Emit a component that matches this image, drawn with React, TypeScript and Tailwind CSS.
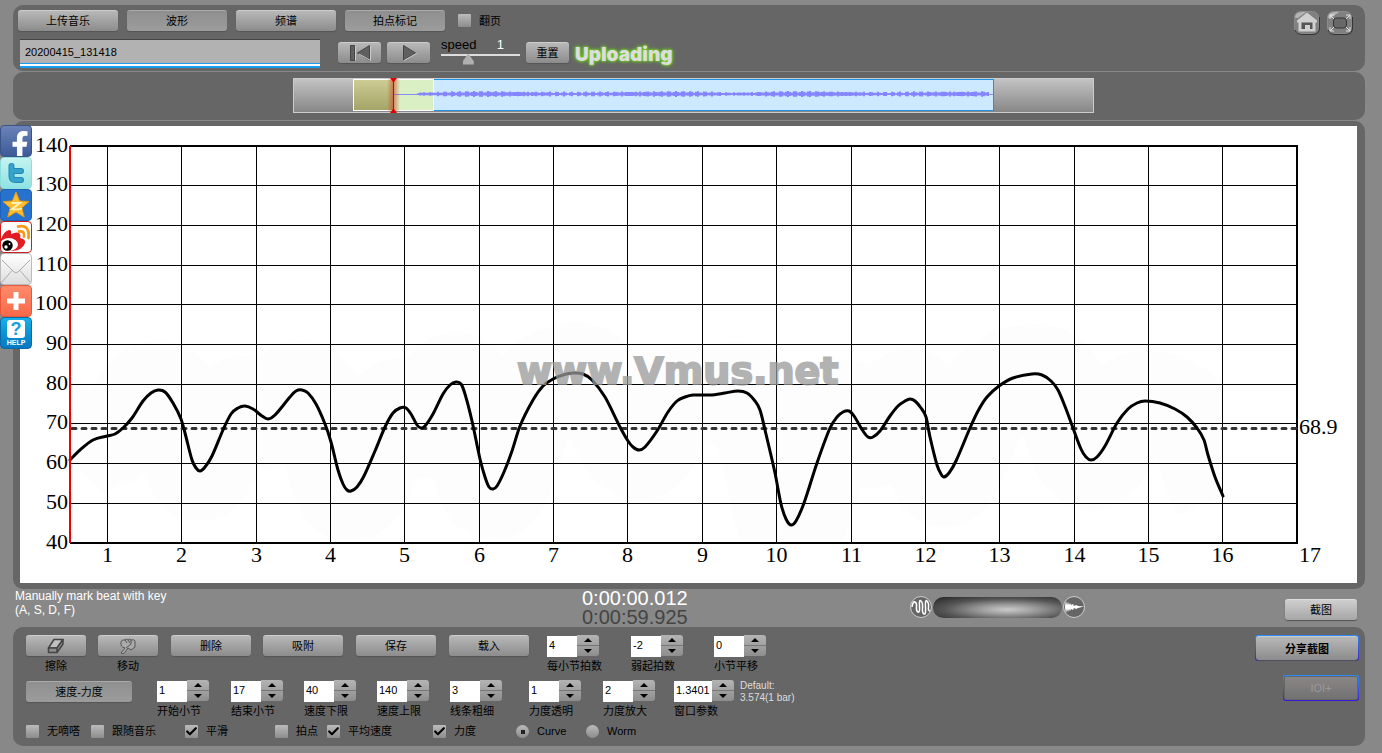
import type { ReactNode } from "react";
import { Check } from "lucide-react";
import { FaFacebookF } from "react-icons/fa";

const SANS = "font-['Liberation_Sans','Noto_Sans_CJK_SC',sans-serif]";
const PANEL = "rounded-[10px] bg-[#666]";

// tempo curve, one [x, y] pair per sample
const curve: [number, number][] = [
  [70, 460], [80, 450], [93, 440], [107, 436], [115, 434], [123, 428], [132, 418], [143, 401], [151, 393], [158, 390],
  [165, 392], [173, 403], [181, 419], [185, 433], [192, 460], [196, 468], [200, 471], [205, 467], [212, 456], [223, 430],
  [231, 414], [238, 408], [245, 406], [253, 409], [262, 416], [268, 419], [275, 415], [290, 397], [296, 391], [302, 390],
  [308, 393], [316, 404], [325, 424], [331, 442], [338, 470], [343, 484], [347, 490], [351, 491], [357, 487], [364, 476],
  [375, 451], [385, 427], [393, 413], [400, 408], [406, 408], [411, 414], [417, 425], [421, 428], [425, 426], [433, 414],
  [443, 394], [450, 385], [456, 382], [461, 384], [465, 394], [472, 421], [480, 459], [485, 477], [489, 487], [493, 489],
  [497, 486], [504, 472], [512, 451], [520, 426], [533, 400], [543, 386], [553, 379], [563, 375], [573, 373], [583, 374],
  [592, 380], [605, 397], [620, 427], [628, 441], [633, 447], [639, 450], [645, 447], [657, 431], [668, 412], [677, 401],
  [685, 397], [693, 395], [710, 395], [725, 393], [738, 391], [747, 393], [755, 401], [760, 410], [765, 430], [775, 473],
  [781, 504], [786, 519], [791, 525], [796, 521], [804, 503], [817, 463], [830, 428], [837, 417], [843, 412], [849, 411],
  [854, 416], [863, 431], [868, 437], [873, 437], [880, 431], [890, 416], [898, 406], [905, 401], [910, 399], [915, 401],
  [921, 408], [926, 417], [930, 437], [937, 465], [941, 474], [944, 477], [949, 473], [956, 461], [970, 428], [978, 411],
  [987, 397], [999, 386], [1013, 378], [1032, 374], [1042, 375], [1051, 381], [1058, 390], [1066, 409], [1073, 428], [1081, 449],
  [1086, 457], [1091, 460], [1097, 457], [1105, 446], [1117, 423], [1128, 409], [1137, 403], [1145, 401], [1160, 403], [1175, 409],
  [1187, 417], [1197, 428], [1204, 440], [1208, 455], [1215, 477], [1223, 496],
];

function smooth(pts: [number, number][]) {
  const slopes = pts.map((_, i) => {
    const a = pts[Math.max(i - 1, 0)];
    const b = pts[Math.min(i + 1, pts.length - 1)];
    return (b[1] - a[1]) / (b[0] - a[0]);
  });
  let d = `M${pts[0][0]} ${pts[0][1]}`;
  for (let i = 0; i < pts.length - 1; i++) {
    const [x0, y0] = pts[i];
    const [x1, y1] = pts[i + 1];
    const t = (x1 - x0) / 3;
    d += ` C${x0 + t} ${y0 + slopes[i] * t} ${x1 - t} ${y1 - slopes[i + 1] * t} ${x1} ${y1}`;
  }
  return d;
}

const bars = Array.from({ length: 17 }, (_, i) => i + 1);
const tempos = Array.from({ length: 11 }, (_, i) => 140 - i * 10);
const barX = (n: number) => Math.round(107 + (n - 1) * 74.35) + 0.5;
const tempoY = (t: number) => Math.floor(146 + (140 - t) * 3.97) + 0.5;

const TempoChart = () => (
  <svg viewBox="20 126 1337 457" className="block h-auto w-full bg-white font-['Liberation_Serif',serif] text-[22px]">
    <clipPath id="plot">
      <rect x="70" y="146" width="1153" height="397" />
    </clipPath>
    <path d={smooth(curve)} fill="none" stroke="#fdfdfd" strokeWidth="100" clipPath="url(#plot)" />
    {bars.slice(0, 16).map((n) => (
      <line key={n} x1={barX(n)} x2={barX(n)} y1="146" y2="543" stroke="#000" />
    ))}
    {tempos.map((t) => (
      <g key={t}>
        <line x1="70" x2="1297" y1={tempoY(t)} y2={tempoY(t)} stroke="#000" />
        <text x="68" y={tempoY(t) + 5} textAnchor="end">{t}</text>
      </g>
    ))}
    <path d="M70 146H1297V543H70" fill="none" stroke="#000" strokeWidth="2" />
    {bars.map((n) => (
      <text key={n} x={n === 17 ? 1310 : barX(n)} y="562" textAnchor="middle">{n}</text>
    ))}
    <line x1="72" x2="1297" y1="428.5" y2="428.5" stroke="#333" strokeWidth="3" strokeDasharray="4 6" strokeLinecap="round" />
    <text x="1299" y="434">68.9</text>
    <path d={smooth(curve)} fill="none" stroke="#000" strokeWidth="3" strokeLinecap="round" />
    <line x1="70" x2="70" y1="146" y2="543" stroke="#f00000" strokeWidth="2" />
    <text x="517" y="384" className="font-['DejaVu_Sans',sans-serif] text-[38px] font-bold" fill="#999" stroke="#999" strokeWidth="2" opacity="0.75">www.Vmus.net</text>
  </svg>
);

const wave = Array.from({ length: 286 }, (_, i) => {
  const x = 125 + i * 2;
  const h = 0.7 + Math.abs(Math.sin(i * 0.04)) * 0.8 + Math.abs(Math.sin(i * 2.3) * Math.cos(i * 0.9)) * 1.6;
  return `M${x} ${16 - h}V${16 + h}`;
}).join("");

const Overview = () => (
  <svg viewBox="0 0 801 35" className="h-[35px] w-[801px]">
    <defs>
      <linearGradient id="track" x1="0" y1="0" x2="0" y2="1">
        <stop offset="0" stopColor="#c4c4c4" />
        <stop offset="1" stopColor="#868686" />
      </linearGradient>
      <linearGradient id="past" x1="0" y1="0" x2="0" y2="1">
        <stop offset="0" stopColor="#cccc94" />
        <stop offset="1" stopColor="#a5a568" />
      </linearGradient>
      <linearGradient id="glow" x1="0" y1="0" x2="1" y2="0">
        <stop offset="0" stopColor="#d04020" stopOpacity="0" />
        <stop offset="0.5" stopColor="#d04020" stopOpacity="0.6" />
        <stop offset="1" stopColor="#d04020" stopOpacity="0" />
      </linearGradient>
    </defs>
    <rect x="0.5" y="0.5" width="800" height="34" fill="url(#track)" stroke="#ccc" />
    <rect x="60.5" y="1.5" width="640" height="31" fill="#cde9ff" stroke="#1b93e6" />
    <rect x="60.5" y="1.5" width="80" height="31" fill="#daf0c4" stroke="#fff" />
    <rect x="61" y="2" width="39" height="30" fill="url(#past)" />
    <path d="M101 16.500H700" stroke="#8a8aff" />
    <path d={wave} stroke="#8585ff" strokeWidth="2" />
    <rect x="94" y="1" width="13" height="32" fill="url(#glow)" />
    <path d="M100.500 2V33" stroke="#600" />
    <path d="M97 0H104L101 4V31L104 35H97L100 31V4Z" fill="#e00000" />
  </svg>
);

const TONES = {
  up: "border-[#ccc] from-[#b8b8b8] to-[#8c8c8c]",
  down: "border-[#aaa] from-[#8f8f8f] to-[#9c9c9c]",
  light: "border-[#ddd] from-[#cfcfcf] to-[#a6a6a6]",
};

type ButtonProps = { children: ReactNode; className: string; tone?: keyof typeof TONES; label?: string };

const Button = ({ children, className, tone = "up", label }: ButtonProps) => (
  <button
    aria-label={label}
    className={`flex min-h-[21px] shrink-0 items-center justify-center rounded-[3px] border-t bg-linear-to-b text-[11px] leading-4 text-black shadow-[0_1px_1px_#555] ${TONES[tone]} ${className}`}
  >
    {children}
  </button>
);

const Tick = ({ label, checked, radio }: { label: string; checked?: boolean; radio?: boolean }) => (
  <label className="flex items-center gap-2 text-[11px] leading-[14px] whitespace-nowrap">
    <span className="relative size-[13px] shrink-0">
      <input
        type={radio ? "radio" : "checkbox"}
        name={radio ? "line" : undefined}
        defaultChecked={checked}
        className={`peer block size-[13px] appearance-none bg-linear-to-b from-[#bbb] to-[#8c8c8c] ${radio ? "rounded-full" : "rounded-[1px]"}`}
      />
      {radio ? (
        <span className="pointer-events-none absolute top-[5px] left-[5px] hidden size-[4px] bg-[#222] peer-checked:block" />
      ) : (
        <Check className="pointer-events-none absolute top-0 left-0 hidden size-[13px] text-black peer-checked:block" strokeWidth={4} />
      )}
    </span>
    {label}
  </label>
);

const Stepper = ({ id, label, value, wide }: { id: string; label: string; value: string; wide?: boolean }) => (
  <div className="flex flex-col gap-px">
    <div className="flex">
      <input id={id} defaultValue={value} className={`mt-px h-[21px] bg-white px-[2px] pb-1 text-[11px] ${wide ? "w-[38px]" : "w-[30px]"}`} />
      <div className="flex h-[21px] w-[22px] flex-col divide-y divide-[#777] rounded-r-[3px] bg-linear-to-b from-[#b4b4b4] to-[#8e8e8e]">
        <button aria-label={`${label} +`} className="flex flex-1 items-center justify-center">
          <svg viewBox="0 0 8 4" className="h-1 w-2"><path d="M0 4L4 0L8 4Z" /></svg>
        </button>
        <button aria-label={`${label} -`} className="flex flex-1 items-center justify-center">
          <svg viewBox="0 0 8 4" className="h-1 w-2"><path d="M0 0L4 4L8 0Z" /></svg>
        </button>
      </div>
    </div>
    <label htmlFor={id} className="text-[11px] leading-4 whitespace-nowrap">{label}</label>
  </div>
);

const TILE = "relative flex size-8 items-center justify-center overflow-hidden rounded-[4px] border";

const ShareBar = () => (
  <nav className="absolute top-[125px] left-0 flex flex-col">
    <a href="#facebook" aria-label="Facebook" className={`${TILE} border-[#3a5488] bg-linear-to-b from-[#6b83b8] to-[#3d5a98]`}>
      <FaFacebookF className="mt-2 ml-2 size-7 shrink-0 text-white" />
    </a>
    <a href="#twitter" aria-label="Twitter" className={`${TILE} border-[#8fdcdc] bg-linear-to-b from-[#c4f3f1] to-[#8fe3e3]`}>
      <svg viewBox="0 0 32 32" className="size-8 shrink-0" fill="none" strokeLinecap="round" strokeLinejoin="round">
        <path d="M11.500 9V19Q11.500 23 15.500 23H21M11.500 14H21" stroke="#2387b5" strokeWidth="6" />
        <path d="M11.500 9V19Q11.500 23 15.500 23H21M11.500 14H21" stroke="#35a3cc" strokeWidth="4" />
      </svg>
    </a>
    <a href="#qzone" aria-label="Qzone" className={`${TILE} border-[#1c62b8] bg-[#2672cc]`}>
      <svg viewBox="0 0 32 32" className="size-8 shrink-0">
        <path d="M16 3L19.600 12L29 12.600L21.800 18.800L24.200 28L16 23L7.800 28L10.200 18.800L3 12.600L12.400 12Z" fill="#fdbd2c" stroke="#e89a10" />
        <path d="M11.500 14H20L12 20Q17 21 22 19.500" fill="none" stroke="#fff3c0" strokeWidth="1.800" />
      </svg>
    </a>
    <a href="#weibo" aria-label="Weibo" className={`${TILE} border-[#d01c1c] bg-white`}>
      <svg viewBox="0 0 32 32" className="size-8 shrink-0">
        <path d="M1 18Q4 10 9 9Q12 9 11 13Q18 10 20 13Q21 15 20 17Q26 18 25 22Q23 29 12 30Q2 30 1 25Z" fill="#e01c24" />
        <ellipse cx="9" cy="23.500" rx="9" ry="6.500" fill="#fff" />
        <circle cx="7.500" cy="24.500" r="5.200" fill="#000" />
        <circle cx="6" cy="26" r="1.700" fill="#fff" />
        <circle cx="9.500" cy="23" r="0.900" fill="#fff" />
        <path d="M18 5.500Q30 3 28.500 17M19 10.500Q25 9.500 24 15.500" fill="none" stroke="#f79a1c" strokeWidth="2.800" strokeLinecap="round" />
      </svg>
    </a>
    <a href="#mail" aria-label="Mail" className={`${TILE} border-[#bbb] bg-linear-to-b from-white to-[#ddd]`}>
      <svg viewBox="0 0 32 32" className="size-8 shrink-0" fill="none" stroke="#aaa">
        <path d="M2 7L14 19Q16 21 18 19L30 7M2 29L12 17.500M30 29L20 17.500" />
      </svg>
    </a>
    <a href="#more" aria-label="More" className={`${TILE} border-[#e8583a] bg-linear-to-b from-[#ff8a6a] to-[#f8694a]`}>
      <svg viewBox="0 0 32 32" className="size-8 shrink-0"><path d="M16 7V25M7 16H25" stroke="#fff" strokeWidth="5" /></svg>
    </a>
    <a href="#help" className={`${TILE} flex-col border-[#0b6aa8] bg-linear-to-b from-[#18b0e8] to-[#0578c0]`}>
      <span className="flex h-[18px] w-[18px] items-center justify-center rounded-[3px] bg-white text-[18px] leading-[18px] font-bold text-[#14a0dc]">?</span>
      <span className="text-[7px] leading-[9px] font-bold text-white">HELP</span>
    </a>
  </nav>
);

const TopBar = () => (
  <header className={`${PANEL} flex h-[66px] justify-between pt-[5px] pr-3 pl-[5px]`}>
    <div>
      <div className="flex items-center gap-[9px]">
        <Button className="w-[100px]">上传音乐</Button>
        <Button className="w-[100px]" tone="down">波形</Button>
        <Button className="w-[100px]">频谱</Button>
        <Button className="w-[100px]" tone="down">拍点标记</Button>
        <div className="pl-1"><Tick label="翻页" /></div>
      </div>
      <div className="flex items-start gap-[6px] pt-[7px] pl-[2px]">
        <div className="mt-px mr-3 border-b-2 border-[#1a9cf0] bg-white pb-[2px]">
          <input
            aria-label="曲目"
            defaultValue="20200415_131418"
            className="block h-[25px] w-[300px] border-t border-b border-t-[#444] border-b-[#1a9cf0] bg-[#b2b2b2] px-[5px] text-[11px]"
          />
        </div>
        <Button className="mt-1 w-[43px]" label="回到开头">
          <svg viewBox="0 0 24 16" className="h-4 w-6" fill="#606060" stroke="#444">
            <path d="M2.500 0.500H6.500V15.500H2.500ZM21.500 0.500V15.500L9.500 8Z" />
            <path d="M7.500 1V15.500M22.500 1V15.500L11 9" fill="none" stroke="#ccc" />
          </svg>
        </Button>
        <Button className="mt-1 w-[43px]" label="播放">
          <svg viewBox="0 0 24 16" className="h-4 w-6" fill="#606060" stroke="#444">
            <path d="M6.500 0.500V15L18.500 8Z" />
            <path d="M7 15.500L19.500 8.500" stroke="#ccc" />
          </svg>
        </Button>
        <div className="ml-[5px] w-[79px]">
          <div className="flex h-4 justify-between pr-4 text-[13px] leading-[14px]">
            <label htmlFor="speed">speed</label>
            <output className="text-white">1</output>
          </div>
          <input
            id="speed"
            type="range"
            min="0"
            max="100"
            defaultValue="32"
            className="block h-3 w-full appearance-none border-t-2 border-[#ddd] bg-transparent [&::-webkit-slider-thumb]:-mt-1 [&::-webkit-slider-thumb]:h-[11px] [&::-webkit-slider-thumb]:w-[11px] [&::-webkit-slider-thumb]:appearance-none [&::-webkit-slider-thumb]:bg-[#b0b0b0] [&::-webkit-slider-thumb]:[clip-path:polygon(50%_0,100%_70%,100%_100%,0_100%,0_70%)]"
          />
        </div>
        <Button className="mt-1 w-[43px]">重置</Button>
        <span className="mt-[5px] font-['Inter',sans-serif] text-[19px] leading-6 font-black text-[#ddd] [text-shadow:0_0_2px_#6fd020,0_0_3px_#6fd020,0_0_4px_#6fd020]">Uploading</span>
      </div>
    </div>
    <div className="flex gap-[7px] pt-px">
      <button aria-label="主页" className="h-6 w-[26px]">
        <svg viewBox="0 0 26 24" className="h-6 w-[26px]">
          <rect x="0.500" y="0.500" width="24" height="22" rx="6" fill="#808080" stroke="#8c8c8c" />
          <path d="M1 19Q3 23.500 8 23.500H19Q25.500 23 25.500 17V6" fill="none" stroke="#333" />
          <path d="M1 7Q1 1 8 1H12L4 7Z" fill="#b4b4b4" />
          <path d="M13 1.500L23 9.500V11.500H21.500V20.500H4.500V11.500H3V9.500Z" fill="#d0d0d0" />
          <path d="M7.500 11.500H18.500V18H16V14H11V18H7.500Z" fill="#555" />
        </svg>
      </button>
      <button aria-label="全屏" className="h-6 w-[26px]">
        <svg viewBox="0 0 26 24" className="h-6 w-[26px]">
          <rect x="0.500" y="0.500" width="24" height="22" rx="6" fill="#808080" stroke="#8c8c8c" />
          <path d="M1 19Q3 23.500 8 23.500H19Q25.500 23 25.500 17V6" fill="none" stroke="#333" />
          <path d="M1 7Q1 1 8 1H12L4 7Z" fill="#b4b4b4" />
          <rect x="6.500" y="7" width="13" height="10" rx="3" fill="#686868" stroke="#333" />
          <path d="M3 8V4H7M3 4L7 8M19 4H23V8M23 4L19 8M3 16V20H7M3 20L7 16M19 20H23V16M23 20L19 16" fill="none" stroke="#e4e4e4" />
        </svg>
      </button>
    </div>
  </header>
);

const StatusRow = () => (
  <div className="flex h-[38px] items-start pr-2">
    <p className="w-[569px] pl-[2px] text-[12px] leading-[14px] text-white">
      Manually mark beat with key
      <br />
      (A, S, D, F)
    </p>
    <div className="text-[20px] leading-[19px]">
      <p className="text-white">0:00:00.012</p>
      <p className="text-[#444]">0:00:59.925</p>
    </div>
    <div className="mt-[7px] mr-[200px] ml-auto flex items-center gap-px">
      <svg viewBox="0 0 22 22" className="size-[22px]" fill="none" stroke="#fff">
        <circle cx="11" cy="11" r="10.500" fill="#666" stroke="#ccc" />
        <path d="M2 11Q3 5 5 6T6.500 11T8 16T9.500 10T11 5T12.500 12T14 18T15.500 11T17 5T18.500 11T20 15" strokeWidth="1.500" />
      </svg>
      <input
        type="range"
        aria-label="混合"
        className="h-[21px] w-[129px] appearance-none rounded-full bg-[radial-gradient(ellipse_at_58%_60%,#ccc_0%,#999_28%,#555_60%,#222_100%)] [&::-webkit-slider-thumb]:size-0 [&::-webkit-slider-thumb]:appearance-none"
      />
      <svg viewBox="0 0 22 22" className="size-[22px]">
        <circle cx="11" cy="11" r="10.500" fill="#666" stroke="#ccc" />
        <path d="M2 10L3 5L4 9L5 6L6 9L7 7L8 9L10 8L11 10L13 9L15 10L21 10.500L15 12L13 13L11 12L10 14L8 13L7 15L6 13L5 16L4 13L3 17L2 12Z" fill="#fff" />
      </svg>
    </div>
    <Button className="mt-[10px] w-[72px]" tone="light">截图</Button>
  </div>
);

const Controls = () => (
  <section className={`${PANEL} flex h-[119px] justify-between pt-2 pr-[6px] pl-[13px]`}>
    <div>
      <div className="grid h-[45px] grid-cols-[72px_73px_92px_93px_93px_98px_84px_83px_auto] items-start">
        <div className="flex w-[60px] flex-col items-center gap-[2px] text-[11px] leading-4">
          <Button className="w-[60px]" label="擦除">
            <svg viewBox="0 0 18 16" className="h-4 w-[18px]" fill="#c0c0c0" stroke="#444" strokeLinejoin="round">
              <path d="M1.500 10L7 1.500H16L10 10Z" strokeWidth="1.500" />
              <path d="M1.500 10V14.500H10V10ZM10 14.500L16 6V1.500L10 10Z" fill="#8c8c8c" strokeWidth="1.500" />
            </svg>
          </Button>
          <span>擦除</span>
        </div>
        <div className="flex w-[60px] flex-col items-center gap-[2px] text-[11px] leading-4">
          <Button className="w-[60px]" label="移动">
            <svg viewBox="0 0 18 16" className="h-4 w-[18px]" fill="#aaa" stroke="#555" strokeLinejoin="round">
              <path d="M2 15L6 10Q1 9 2 4Q3 1 6 2Q7 0 9 2Q11 0 12 2Q15 1 16 3V9L12 12L9 10L5 15.500Q2 16 2 15Z" />
              <path d="M6 2L8 5M9 2L11 5M12 2V6L7 10" fill="none" />
            </svg>
          </Button>
          <span>移动</span>
        </div>
        <Button className="w-20">删除</Button>
        <Button className="w-20">吸附</Button>
        <Button className="w-20">保存</Button>
        <Button className="w-20">载入</Button>
        <Stepper id="beats" label="每小节拍数" value="4" />
        <Stepper id="upbeat" label="弱起拍数" value="-2" />
        <Stepper id="shift" label="小节平移" value="0" />
      </div>
      <div className="grid h-11 grid-cols-[131px_74px_73px_73px_73px_79px_74px_71px_auto] items-start">
        <Button className="mt-px w-[106px]" tone="down">速度-力度</Button>
        <Stepper id="start" label="开始小节" value="1" />
        <Stepper id="end" label="结束小节" value="17" />
        <Stepper id="min" label="速度下限" value="40" />
        <Stepper id="max" label="速度上限" value="140" />
        <Stepper id="stroke" label="线条粗细" value="3" />
        <Stepper id="alpha" label="力度透明" value="1" />
        <Stepper id="scale" label="力度放大" value="2" />
        <div className="flex gap-[6px]">
          <Stepper id="window" label="窗口参数" value="1.3401" wide />
          <p className="text-[10px] leading-3 text-[#ddd]">
            Default:
            <br />
            3.574(1 bar)
          </p>
        </div>
      </div>
      <div className="grid grid-cols-[65px_94px_90px_52px_106px_83px_70px_auto] items-center">
        <Tick label="无嘀嗒" />
        <Tick label="跟随音乐" />
        <Tick label="平滑" checked />
        <Tick label="拍点" />
        <Tick label="平均速度" checked />
        <Tick label="力度" checked />
        <Tick label="Curve" radio checked />
        <Tick label="Worm" radio />
      </div>
    </div>
    <div className="flex flex-col items-end gap-[14px]">
      <div className="rounded-[3px] bg-linear-to-b from-[#2a8cff] to-[#3a10d8] p-px">
        <Button className="h-6 w-[102px] font-bold">分享截图</Button>
      </div>
      <div className="rounded-[3px] bg-linear-to-b from-[#2a8cff] to-[#3a10d8] p-px">
        <button disabled className="flex h-6 w-[74px] items-center justify-center rounded-[2px] border border-[#666] bg-linear-to-b from-[#8a8686] to-[#727272] text-[11px] text-[#999]">IOI+</button>
      </div>
    </div>
  </section>
);

const App = () => (
  <div className={`relative min-h-screen bg-[#888] pt-[5px] pr-[17px] pb-[7px] pl-[13px] text-black ${SANS}`}>
    <TopBar />
    <section className={`${PANEL} mt-px flex h-12 justify-center pt-[6px] pl-2`}>
      <Overview />
    </section>
    <main className={`${PANEL} mt-px pt-[5px] pr-2 pb-[6px] pl-[7px]`}>
      <TempoChart />
    </main>
    <StatusRow />
    <Controls />
    <ShareBar />
  </div>
);

export default App;
